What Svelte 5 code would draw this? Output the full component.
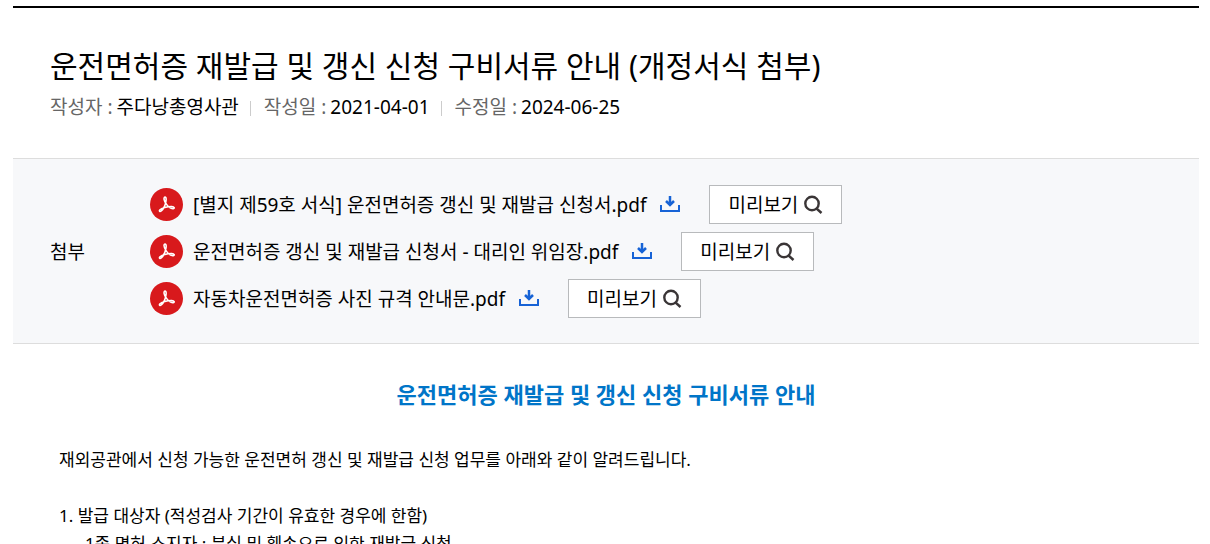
<script>
  const files = [
    '[별지 제59호 서식] 운전면허증 갱신 및 재발급 신청서.pdf',
    '운전면허증 갱신 및 재발급 신청서 - 대리인 위임장.pdf',
    '자동차운전면허증 사진 규격 안내문.pdf'
  ];
  const info = [
    ['작성자', '주다낭총영사관'],
    ['작성일', '2021-04-01'],
    ['수정일', '2024-06-25']
  ];
</script>

<article class="board-view">
  <header>
    <h1>운전면허증 재발급 및 갱신 신청 구비서류 안내 (개정서식 첨부)</h1>
    <dl class="info">
      {#each info as [label, value]}
        <div>
          <dt>{label} :</dt>
          <dd>{value}</dd>
        </div>
      {/each}
    </dl>
  </header>

  <section class="attach">
    <h2>첨부</h2>
    <ul>
      {#each files as file}
        <li>
          <svg class="pdf" viewBox="0 0 33 33" aria-hidden="true">
            <circle cx="16.5" cy="16.5" r="16.5" fill="#d8191c" />
            <path d="M14.500 9.200c1.600-.6 1.900 1.300 1.500 3.600-.5 3.600-2.600 8.200-4.800 10.200-1.200 1-2.300.2-1.400-.9 1.700-2 7.600-3.800 12-3.600 2.600.1 3.200 1.900 1.300 2.100-2.300.2-5.200-2.200-6.900-4.700-1.500-2.300-2.600-5.700-1.700-6.700z" fill="none" stroke="#fff" stroke-width="1.600" stroke-linejoin="round" />
          </svg>
          <a class="name" href="#file">{file}</a>
          <a class="down" href="#download" aria-label="다운로드">
            <svg viewBox="0 0 20 17">
              <path d="M1 9v6h18V9" fill="none" stroke="#1763d6" stroke-width="2" />
              <path d="M10 0v9M6 5l4 4 4-4" fill="none" stroke="#1763d6" stroke-width="2.500" />
              <path d="M7 6h6l-3 4z" fill="#1763d6" />
            </svg>
          </a>
          <button type="button">
            <span>미리보기</span>
            <svg viewBox="0 0 19 19" aria-hidden="true">
              <circle cx="8" cy="8.500" r="6.700" /><path d="M12.500 13.500l5 4.500" />
            </svg>
          </button>
        </li>
      {/each}
    </ul>
  </section>

  <section class="content">
    <h3>운전면허증 재발급 및 갱신 신청 구비서류 안내</h3>
    <p>재외공관에서 신청 가능한 운전면허 갱신 및 재발급 신청 업무를 아래와 같이 알려드립니다.</p>
    <p>1. 발급 대상자 (적성검사 기간이 유효한 경우에 한함)</p>
    <p class="sub">- 1종 면허 소지자 : 분실 및 훼손으로 인한 재발급 신청</p>
  </section>
</article>

<style>
:global(body) {
  margin: 0;
  height: 100vh;
  overflow: hidden;
  background: #fff;
}
.board-view {
  margin: 6px 11px 0 13px;
  border-top: 2px solid #000;
  color: #000;
  font-family: "Noto Sans", "Noto Sans CJK KR", sans-serif;
  font-size: 19px;
}
h1, h2, h3, p, ul, dl, dd {
  margin: 0;
  padding: 0;
  font-weight: 400;
}
header {
  padding: 36px 37px 38px;
}
h1 {
  font-size: 30px;
  line-height: 44px;
}
.info {
  display: flex;
  margin-top: 6px;
  line-height: 26px;
}
.info div {
  display: flex;
  align-items: center;
  gap: 4px;
}
.info div + div::before {
  content: "";
  width: 1px;
  height: 15px;
  margin: 2px 9px 0 11px;
  background: #ccc;
}
dt {
  color: #666;
}
.attach {
  display: flex;
  align-items: center;
  padding: 22px 37px 21px;
  border-top: 1px solid #ddd;
  border-bottom: 1px solid #ddd;
  background: #f7f8fa;
}
h2 {
  width: 100px;
  padding-bottom: 2px;
  font-size: 19px;
}
ul {
  list-style: none;
}
li {
  display: flex;
  align-items: center;
  height: 47px;
}
.pdf {
  width: 33px;
  height: 33px;
}
.name {
  margin-left: 10px;
  padding-bottom: 2px;
  color: #000;
  text-decoration: none;
}
.down {
  display: flex;
  margin: 0 29px 0 14px;
}
.down svg {
  width: 20px;
  height: 17px;
}
button {
  display: flex;
  align-items: center;
  gap: 6px;
  height: 39px;
  padding: 0 18px;
  border: 1px solid #b8babc;
  background: #fff;
  color: #000;
  font: inherit;
}
button span {
  padding-bottom: 2px;
}
button svg {
  width: 19px;
  height: 19px;
  fill: none;
  stroke: #3a3536;
  stroke-width: 2.400;
}
.content {
  padding: 30px 46px 0;
}
h3 {
  margin-bottom: 32px;
  color: #0075c8;
  font-size: 22px;
  font-weight: 700;
  line-height: 40px;
  text-align: center;
}
p {
  margin-bottom: 28px;
  font-size: 17px;
  line-height: 28px;
}
.sub {
  margin-top: -28px;
  padding-left: 16px;
}
</style>
